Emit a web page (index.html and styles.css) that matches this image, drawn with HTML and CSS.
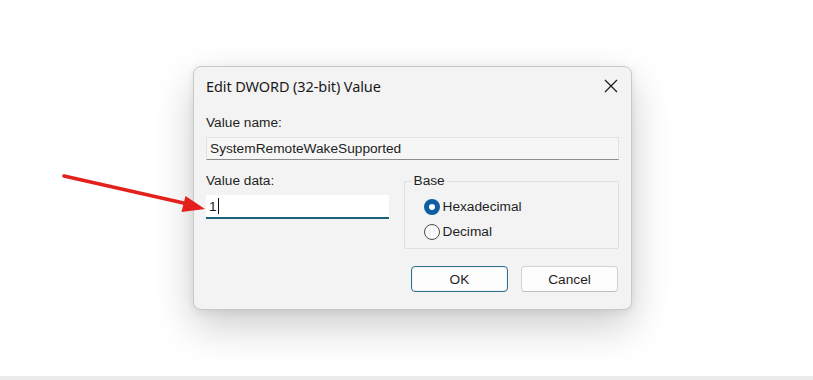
FILE: index.html
```html
<!DOCTYPE html>
<html>
<head>
<meta charset="utf-8">
<link rel="stylesheet" href="styles.css">
</head>
<body>
<div class="page">
  <div class="dialog">
    <div class="titlebar">
      <span class="title">Edit DWORD (32-bit) Value</span>
      <svg class="close" width="14" height="14" viewBox="0 0 14 14"><path d="M1 1L13 13M13 1L1 13" stroke="#1a1a1a" stroke-width="1.2" fill="none"/></svg>
    </div>
    <div class="content">
      <div class="label">Value name:</div>
      <div class="namefield">SystemRemoteWakeSupported</div>
      <div class="row">
        <div class="left">
          <div class="label">Value data:</div>
          <div class="datafield"><span>1</span><span class="caret"></span></div>
        </div>
        <div class="group">
          <span class="legend">Base</span>
          <div class="radio"><span class="dot on"></span>Hexadecimal</div>
          <div class="radio"><span class="dot"></span>Decimal</div>
        </div>
      </div>
      <div class="buttons">
        <div class="btn primary">OK</div>
        <div class="btn">Cancel</div>
      </div>
    </div>
  </div>
  <svg class="arrow" width="220" height="230" viewBox="0 0 220 230">
    <line x1="64" y1="176" x2="188" y2="204" stroke="#e3201b" stroke-width="3.6" stroke-linecap="round"/>
    <polygon points="205,209 185.5,196 181.5,212" fill="#e3201b"/>
  </svg>
</div>
<div class="strip"></div>
</body>
</html>
```
FILE: styles.css
```css
html, body { margin: 0; padding: 0; background: #ffffff; }
body { font-family: "Liberation Sans", Arial, sans-serif; color: #1b1b1b; }
.page { position: relative; height: 376px; box-sizing: border-box; padding: 66px 0 0 193px; }
.strip { height: 4px; background: #ececec; }
.dialog {
  width: 439px; height: 244px; box-sizing: border-box;
  background: #f3f3f3; border: 1px solid #c9c9c9; border-radius: 8px;
  box-shadow: 0 16px 40px rgba(0,0,0,0.20), 0 2px 8px rgba(0,0,0,0.08);
}
.titlebar { height: 38px; display: flex; align-items: center; justify-content: space-between; padding: 0 12px; box-sizing: border-box; }
.title { font-family: "Noto Sans", "Open Sans", sans-serif; font-size: 14.5px; color: #1a1a1a; letter-spacing: -0.1px; }
.close { margin-right: 1px; }
.content { padding: 10px 12px 0 12px; }
.label { font-size: 13.7px; height: 16px; line-height: 16px; color: #1f1f1f; }
.namefield {
  margin-top: 6px; height: 23px; box-sizing: border-box; width: 413px;
  background: #f6f6f6; border: 1px solid #e2e2e2; border-bottom: 1px solid #8c8c8c;
  font-size: 13.7px; line-height: 21px; padding-left: 3px; color: #1f1f1f;
}
.row { display: flex; margin-top: 10px; }
.left { width: 198px; padding-top: 3px; }
.datafield {
  margin-top: 6px; width: 183px; height: 24px; box-sizing: border-box;
  background: #ffffff; border-bottom: 2px solid #1c5f78; display: flex; align-items: center; padding-left: 3px;
  font-size: 13.7px;
}
.caret { display: inline-block; width: 1px; height: 16px; background: #111; margin-left: 1px; }
.group {
  position: relative; margin-top: 11px; width: 216px; height: 68px; box-sizing: border-box;
  border: 1px solid #dfdfdf; border-radius: 2px; padding: 12px 0 0 19px;
}
.legend { position: absolute; left: 7px; top: -9px; background: #f3f3f3; padding: 0 2px; font-size: 13.7px; line-height: 16px; color: #1f1f1f; }
.radio { display: flex; align-items: center; font-size: 13.7px; height: 25px; color: #1f1f1f; }
.dot { width: 16px; height: 16px; box-sizing: border-box; border-radius: 50%; border: 1px solid #4d4d4d; background: #fbfbfb; margin-right: 3px; }
.dot.on { border: 5px solid #0f5ea3; background: #ffffff; }
.buttons { display: flex; justify-content: flex-end; gap: 13px; margin-top: 17px; padding-right: 1px; }
.btn {
  width: 97px; height: 26px; box-sizing: border-box; border-radius: 4px;
  background: #fdfdfd; border: 1px solid #d2d2d2; border-bottom-color: #bdbdbd;
  font-size: 13.7px; display: flex; align-items: center; justify-content: center; color: #1f1f1f;
}
.btn.primary { border: 1px solid #2f6e8c; box-shadow: inset 0 0 0 1px #eef4f7; }
.arrow { position: absolute; left: 0; top: 0; }
```
